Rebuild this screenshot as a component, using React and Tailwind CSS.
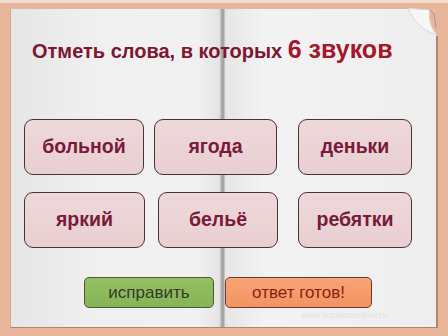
import React from "react";

const F = { fontFamily: '"Liberation Sans", Arial, sans-serif' };

function Word({ children, w }) {
  return (
    <div
      className={`h-[56px] ${w} flex items-center justify-center rounded-[9px] border border-[#4a3333] bg-[linear-gradient(180deg,#eed8da_0%,#e9cfd2_100%)] text-[19.5px] font-bold text-[#7a1a3a]`}
    >
      {children}
    </div>
  );
}

export default function App() {
  return (
    <div className="w-[448px] h-[336px] bg-[#e7b69b] pt-[9px] pl-[10px] pr-[10px] pb-[8px] relative overflow-hidden" style={F}>
      <div className="absolute left-0 top-0 w-full h-[3px] bg-[#f3dccf]"></div>
      <div className="relative h-full border-r-2 border-b border-[#b28470] border-l border-l-[#d7a78f] bg-[linear-gradient(90deg,#e6e6e6_0%,#f0f0f0_20%,#f1f1f1_44%,#e4e4e4_49%,#a5a5a5_49.6%,#a5a5a5_50%,#e6e6e6_50.5%,#f3f3f3_60%,#eeeeee_100%)] flex flex-col">
        <div className="pl-[21px] pt-[22px] h-[52px] flex items-baseline">
          <span className="text-[20px] font-bold text-[#7d1731] whitespace-pre">Отметь слова, в которых </span>
          <span className="text-[25px] font-bold text-[#a3182b]">6 звуков</span>
        </div>
        <div className="mt-[58px] ml-[13px] flex">
          <Word w="w-[120px]">больной</Word>
          <div className="w-[10px]"></div>
          <Word w="w-[123px]">ягода</Word>
          <div className="w-[21px]"></div>
          <Word w="w-[114px]">деньки</Word>
        </div>
        <div className="mt-[17px] ml-[13px] flex">
          <Word w="w-[121px]">яркий</Word>
          <div className="w-[13px]"></div>
          <Word w="w-[120px]">бельё</Word>
          <div className="w-[20px]"></div>
          <Word w="w-[114px]">ребятки</Word>
        </div>
        <div className="mt-[29px] ml-[73px] flex gap-[11px]">
          <div className="w-[130px] h-[31px] rounded-[5px] border border-[#4b5a2e] bg-[linear-gradient(180deg,#95c064_0%,#86b455_100%)] flex items-center justify-center text-[17px] text-[#333a2a]">
            исправить
          </div>
          <div className="w-[147px] h-[31px] rounded-[5px] border border-[#6b3a2a] bg-[linear-gradient(180deg,#f8a476_0%,#f39462_100%)] flex items-center justify-center text-[17px] text-[#8a1c14]">
            ответ готов!
          </div>
        </div>
        <div className="absolute right-[-2px] top-[-1px] w-[30px] h-[28px]">
          <svg width="30" height="28" viewBox="0 0 30 28">
            <path d="M0 0 L30 0 L30 28 Z" fill="#e7b69b" />
            <path d="M0 0 C4 10 10 20 30 28 C22 20 20 8 22 2 Z" fill="#f6f6f6" stroke="#cfcfcf" strokeWidth="0.8" />
            <path d="M22 2 L26 6 L28 20" fill="none" stroke="#9a8a84" strokeWidth="0.8" />
          </svg>
        </div>
        <div className="absolute left-[290px] bottom-[5px] text-[9px] text-[#e2e2e2]">www.kopilkaurokov.ru</div>
      </div>
    </div>
  );
}
